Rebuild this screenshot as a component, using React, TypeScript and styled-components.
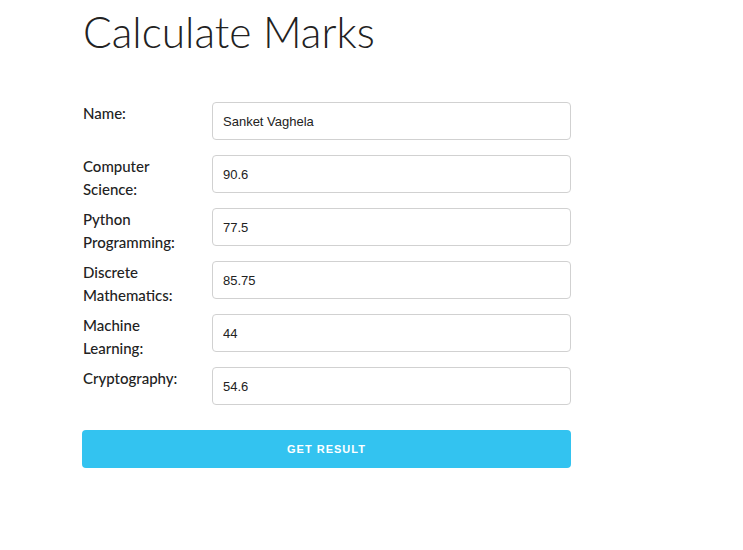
import React from "react";
import styled, { createGlobalStyle } from "styled-components";

const GlobalStyle = createGlobalStyle`
  html, body {
    margin: 0;
    padding: 0;
    background: #ffffff;
    font-family: Lato, "Open Sans", sans-serif;
    color: #222222;
  }
`;

const Page = styled.div`
  padding: 0 0 0 82px;
  width: 489px;
`;

const Title = styled.h1`
  margin: 8px 0 0 1px;
  font-size: 42.5px;
  line-height: 48px;
  font-weight: 300;
  letter-spacing: 0;
  color: #222222;
`;

const Form = styled.form`
  margin-top: 46px;
  display: flex;
  flex-direction: column;
  gap: 25px;
`;

const Fields = styled.div`
  display: grid;
  grid-template-columns: 130px 359px;
  grid-auto-rows: 38px;
  row-gap: 15px;
`;

const Label = styled.label`
  padding: 0 12px 0 1px;
  font-size: 15px;
  font-weight: 500;
  line-height: 23px;
  color: #222222;
`;

const Input = styled.input`
  box-sizing: border-box;
  height: 38px;
  width: 100%;
  padding: 6px 10px;
  border: 1px solid #d1d1d1;
  border-radius: 4px;
  background: #ffffff;
  font-family: "Liberation Sans", Arial, sans-serif;
  font-size: 13px;
  color: #222222;
  outline: none;
`;

const SubmitButton = styled.button`
  height: 38px;
  width: 100%;
  border: none;
  border-radius: 4px;
  background: #33c3f0;
  color: #ffffff;
  font-family: "Liberation Sans", Arial, sans-serif;
  font-size: 11px;
  font-weight: 700;
  letter-spacing: 1px;
  text-transform: uppercase;
  cursor: pointer;
`;

const fields = [
  { label: "Name:", value: "Sanket Vaghela" },
  { label: "Computer Science:", value: "90.6" },
  { label: "Python Programming:", value: "77.5" },
  { label: "Discrete Mathematics:", value: "85.75" },
  { label: "Machine Learning:", value: "44" },
  { label: "Cryptography:", value: "54.6" },
];

const App = () => {
  return (
    <>
      <GlobalStyle />
      <Page>
        <Title>Calculate Marks</Title>
        <Form onSubmit={(e) => e.preventDefault()}>
          <Fields>
            {fields.map((f) => (
              <React.Fragment key={f.label}>
                <Label>{f.label}</Label>
                <Input type="text" defaultValue={f.value} />
              </React.Fragment>
            ))}
          </Fields>
          <SubmitButton type="submit">Get Result</SubmitButton>
        </Form>
      </Page>
    </>
  );
};

export default App;
